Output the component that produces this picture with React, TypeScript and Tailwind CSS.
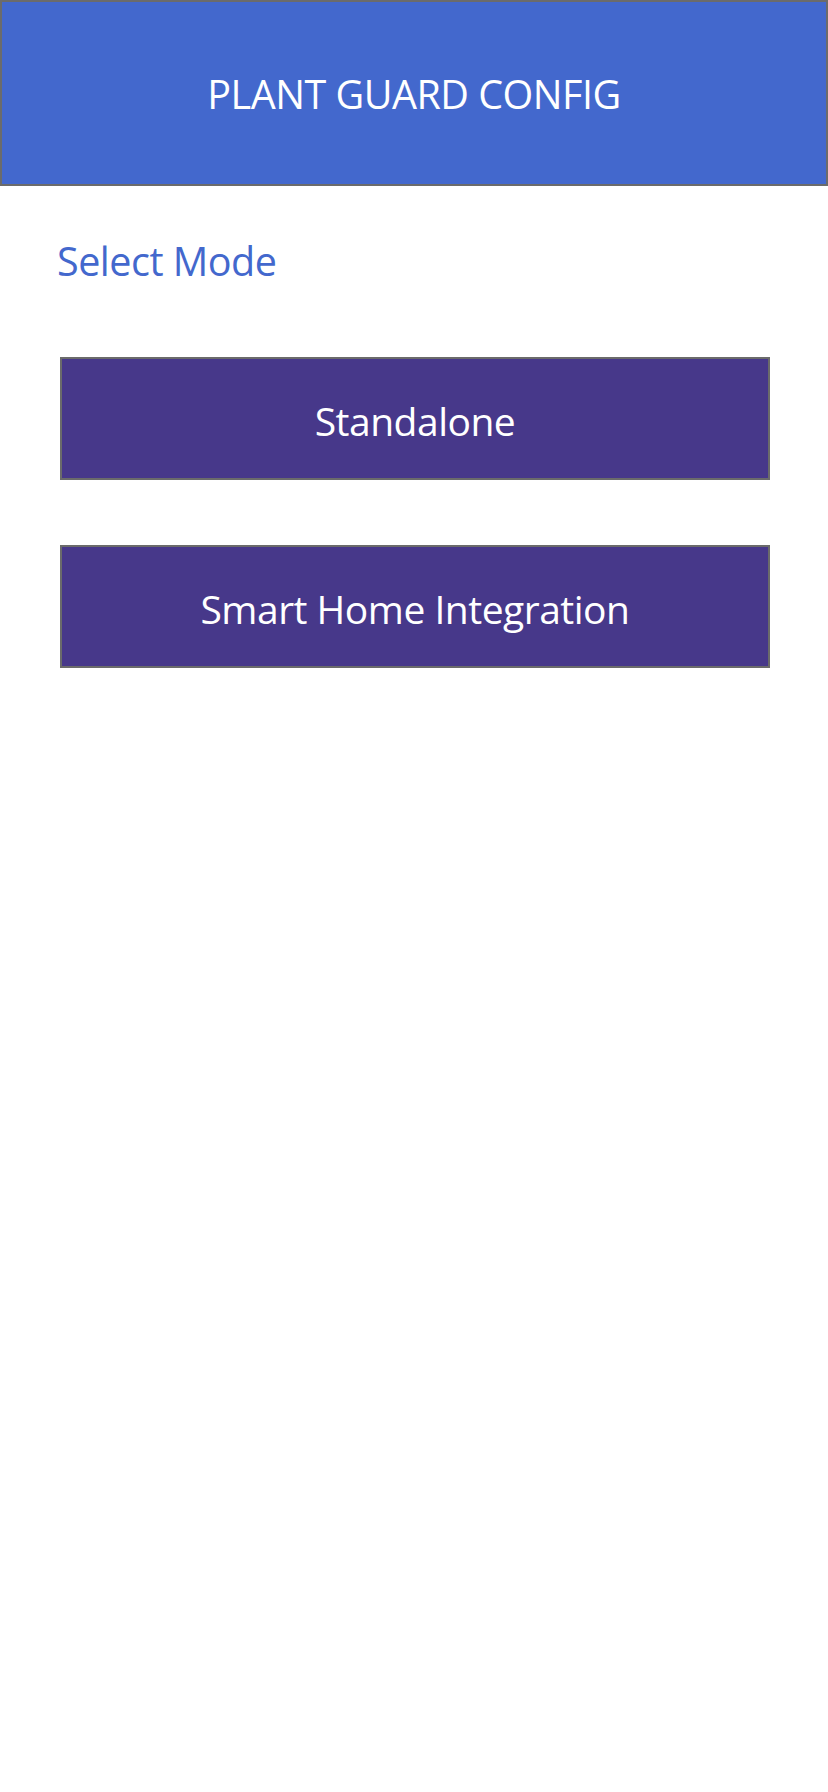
export default function App() {
  const modes = ['Standalone', 'Smart Home Integration'];

  return (
    <div className="min-h-[1792px] bg-white" style={{ fontFamily: '"Open Sans", "Noto Sans", sans-serif' }}>
      {/* Header */}
      <header className="h-[186px] border-2 border-[#6b6b6b] bg-[#4368cd] flex items-center justify-center">
        <h1 className="text-[39.5px] text-white tracking-[-0.5px] pt-[4px]">PLANT GUARD CONFIG</h1>
      </header>

      <main className="pl-[57px] pr-[58px] pt-[35px]">
        <h2 className="text-[39.5px] text-[#4368cd] tracking-[-0.5px] leading-[80px]">Select Mode</h2>

        <div className="mt-[56px] ml-[3px] flex flex-col gap-[65px]">
          {modes.map(m => (
            <button
              key={m}
              className="h-[123px] w-full border-2 border-[#6b6b6b] bg-[#47388a] text-white text-[39px] tracking-[-0.5px] flex items-center justify-center pt-[6px]"
            >
              {m}
            </button>
          ))}
        </div>
      </main>
    </div>
  );
}
